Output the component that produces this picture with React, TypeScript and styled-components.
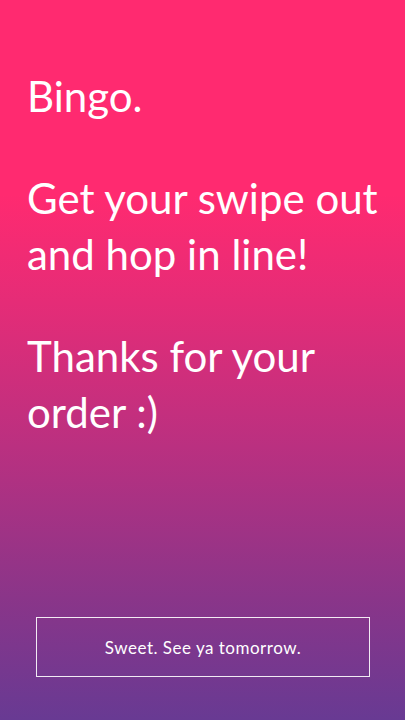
import React from "react";
import styled, { createGlobalStyle } from "styled-components";

const Global = createGlobalStyle`
  html, body { margin: 0; padding: 0; }
  body { font-family: Lato, "Noto Sans", sans-serif; }
`;

const Screen = styled.div`
  width: 405px;
  height: 720px;
  box-sizing: border-box;
  display: flex;
  flex-direction: column;
  justify-content: space-between;
  padding: 68px 36px 43px 27px;
  background: linear-gradient(180deg, #ff2a70 0%, #ff2a70 27%, #e52c77 42%, #ba3080 62%, #8a3589 83%, #683a93 100%);
  color: #ffffff;
`;

const Messages = styled.div`
  display: flex;
  flex-direction: column;
  gap: 46px;
`;

const Message = styled.p`
  margin: 0;
  font-family: Lato, "Noto Sans", sans-serif;
  font-size: 42px;
  line-height: 56px;
  font-weight: 400;
  letter-spacing: 0px;
  white-space: nowrap;
`;

const DoneButton = styled.button`
  margin-left: 9px;
  height: 60px;
  width: 334px;
  box-sizing: border-box;
  border: 1.5px solid rgba(255, 255, 255, 0.9);
  background: transparent;
  color: #ffffff;
  font-family: Lato, "Noto Sans", sans-serif;
  font-size: 17px;
  letter-spacing: 0.5px;
  cursor: pointer;
`;

export default function App() {
  return (
    <>
      <Global />
      <Screen>
        <Messages>
          <Message>Bingo.</Message>
          <Message>Get your swipe out<br />and hop in line!</Message>
          <Message>Thanks for your<br />order :)</Message>
        </Messages>
        <DoneButton>Sweet. See ya tomorrow.</DoneButton>
      </Screen>
    </>
  );
}
